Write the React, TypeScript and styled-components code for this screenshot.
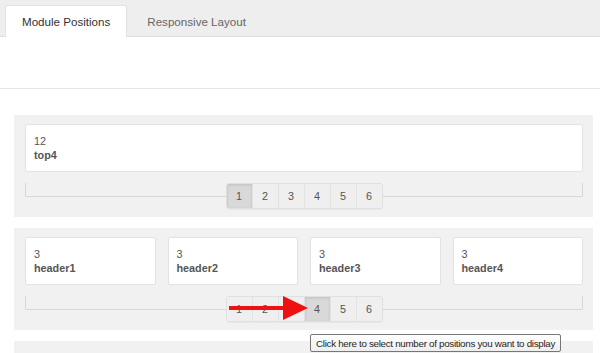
import * as React from 'react';
import styled, { createGlobalStyle } from 'styled-components';

const GlobalStyle = createGlobalStyle`
  html, body {
    margin: 0;
    padding: 0;
    background: #ffffff;
    overflow: hidden;
  }
  body {
    font-family: 'Liberation Sans', Arial, sans-serif;
  }
`;

const Page = styled.div`
  position: relative;
  width: 600px;
  height: 353px;
  overflow: hidden;
`;

const TabBar = styled.div`
  display: flex;
  gap: 3px;
  height: 37px;
  padding: 5px 0 0 5px;
  box-sizing: border-box;
  background: #eeeeee;
  border-bottom: 1px solid #dedede;
`;

const Tab = styled.div<{ $active?: boolean }>`
  display: flex;
  align-items: center;
  height: 32px;
  padding: 0 16px;
  box-sizing: border-box;
  font-size: 11.6px;
  color: ${(p) => (p.$active ? '#333333' : '#666666')};
  background: ${(p) => (p.$active ? '#ffffff' : 'transparent')};
  border: 1px solid ${(p) => (p.$active ? '#e2e2e2' : 'transparent')};
  border-bottom: none;
  border-radius: 3px 3px 0 0;
`;

const Spacer = styled.div`
  height: 51px;
  border-bottom: 1px solid #e6e6e6;
`;

const Body = styled.div`
  display: flex;
  flex-direction: column;
  gap: 11px;
  padding: 26px 7px 0 14px;
`;

const Panel = styled.div`
  background: #f1f1f1;
  padding: 9px 10px 8px 11px;
  display: flex;
  flex-direction: column;
  gap: 11px;
  min-height: 40px;
`;

const CardRow = styled.div<{ $cols: number }>`
  display: grid;
  grid-template-columns: repeat(${(p) => p.$cols}, 1fr);
  gap: 12px;
`;

const Card = styled.div`
  background: #ffffff;
  border: 1px solid #e2e2e2;
  border-radius: 2px;
  padding: 9px 8px 9px 8px;
  font-size: 10.8px;
  line-height: 14px;
  color: #555555;
`;

const Size = styled.div``;

const Name = styled.div`
  font-weight: bold;
`;

const Rule = styled.div`
  display: grid;
  height: 26px;
`;

const Track = styled.div`
  grid-area: 1 / 1;
  height: 14px;
  border: 1px solid #d8d8d8;
  border-top: none;
  box-sizing: border-box;
`;

const Pager = styled.div`
  grid-area: 1 / 1;
  justify-self: center;
  display: flex;
  border: 1px solid #e0e0e0;
  border-radius: 3px;
  overflow: hidden;
  box-shadow: 0 1px 1px rgba(0, 0, 0, 0.04);
`;

const PageButton = styled.div<{ $active?: boolean }>`
  width: 25px;
  height: 24px;
  display: flex;
  align-items: center;
  justify-content: center;
  font-size: 10.8px;
  color: #555555;
  background: ${(p) => (p.$active ? '#d9d9d9' : '#efefef')};
  box-shadow: ${(p) => (p.$active ? 'inset 0 1px 3px rgba(0,0,0,0.12)' : 'none')};
  & + & {
    border-left: 1px solid #e2e2e2;
  }
`;

const Arrow = styled.svg`
  position: absolute;
  left: 227px;
  top: 294px;
`;

const Tooltip = styled.div`
  position: absolute;
  left: 310px;
  top: 334px;
  height: 16px;
  padding: 0 5px;
  display: flex;
  align-items: center;
  font-family: 'Liberation Sans', Tahoma, sans-serif;
  font-size: 9.8px;
  letter-spacing: -0.3px;
  color: #1e1e1e;
  background: linear-gradient(#ffffff, #eeeeee);
  border: 1px solid #767676;
  border-radius: 2px;
  white-space: nowrap;
`;

const pages = [1, 2, 3, 4, 5, 6];

const Pagination: React.FC<{ active: number }> = ({ active }) => (
  <Rule>
    <Track />
    <Pager>
      {pages.map((n) => (
        <PageButton key={n} $active={n === active}>
          {n}
        </PageButton>
      ))}
    </Pager>
  </Rule>
);

const headers = ['header1', 'header2', 'header3', 'header4'];

export default function App() {
  return (
    <Page>
      <GlobalStyle />
      <TabBar>
        <Tab $active>Module Positions</Tab>
        <Tab>Responsive Layout</Tab>
      </TabBar>
      <Spacer />
      <Body>
        <Panel>
          <CardRow $cols={1}>
            <Card>
              <Size>12</Size>
              <Name>top4</Name>
            </Card>
          </CardRow>
          <Pagination active={1} />
        </Panel>
        <Panel>
          <CardRow $cols={4}>
            {headers.map((h) => (
              <Card key={h}>
                <Size>3</Size>
                <Name>{h}</Name>
              </Card>
            ))}
          </CardRow>
          <Pagination active={4} />
        </Panel>
        <Panel />
      </Body>
      <Arrow width="84" height="28" viewBox="0 0 84 28">
        <path d="M2 12 L56 12 L56 2 L81 14 L56 26 L56 16 L2 16 Z" fill="#ee1111" />
      </Arrow>
      <Tooltip>Click here to select number of positions you want to display</Tooltip>
    </Page>
  );
}
